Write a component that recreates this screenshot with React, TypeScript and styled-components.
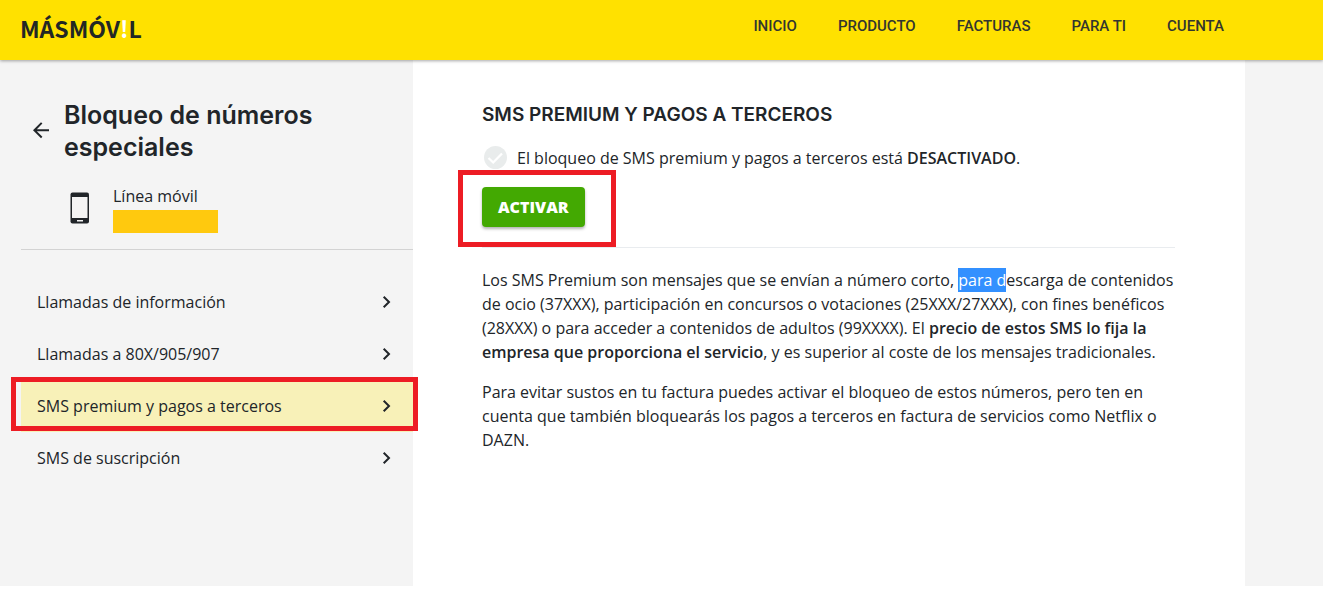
import React from "react";
import styled, { createGlobalStyle } from "styled-components";

const INK = "#212529";
const YELLOW = "#ffe100";
const BODY_FONT = `"Open Sans", "Noto Sans", sans-serif`;
const TITLE_FONT = `Inter, "Open Sans", sans-serif`;

const GlobalStyle = createGlobalStyle`
  * { box-sizing: border-box; }
  body {
    margin: 0;
    background: #fff;
    color: ${INK};
    font: 400 16px/24px ${BODY_FONT};
  }
`;

const Header = styled.header`
  position: relative;
  z-index: 1;
  display: flex;
  align-items: center;
  justify-content: space-between;
  height: 60px;
  padding: 0 99px 0 20px;
  background: ${YELLOW};
  box-shadow: 0 1px 3px rgba(0, 0, 0, 0.35);
`;

const Logo = styled.a`
  padding-bottom: 4px;
  color: #222725;
  font: 700 23px/40px "Noto Sans CJK SC", sans-serif;
  text-decoration: none;
`;

const LogoMark = styled.span`
  color: #fff;
`;

const Nav = styled.nav`
  display: flex;
  gap: 41px;
  padding-bottom: 8px;
`;

const NavLink = styled.a`
  color: #33362f;
  font: 500 15px/24px Roboto, sans-serif;
  text-decoration: none;
`;

const Page = styled.div`
  display: flex;
  min-height: calc(100vh - 69px);
  background: #f4f4f4;
`;

const Sidebar = styled.aside`
  flex: 0 0 413px;
  padding: 39px 0 24px 21px;
`;

const TitleRow = styled.div`
  display: flex;
  align-items: center;
  gap: 11px;
  padding: 0 64px 0 8px;
`;

const BackButton = styled.button`
  display: flex;
  padding: 0;
  border: 0;
  background: none;
  color: ${INK};
`;

const Title = styled.h1`
  margin: 0;
  font: 600 25px/32px ${TITLE_FONT};
`;

const Device = styled.div`
  display: flex;
  gap: 23px;
  margin-top: 21px;
  padding: 0 0 16px 49px;
  border-bottom: 1px solid #d3d3d3;
`;

const DeviceIcon = styled.svg`
  flex: none;
  width: 20px;
  height: 32px;
  margin-top: 8px;
`;

const HiddenNumber = styled.div`
  width: 105px;
  height: 23px;
  margin-top: 2px;
  background: #ffc90e;
`;

const Menu = styled.nav`
  display: flex;
  flex-direction: column;
  margin-top: 26px;
`;

const MenuItem = styled.a<{ $active?: boolean }>`
  position: relative;
  display: flex;
  align-items: center;
  justify-content: space-between;
  height: 52px;
  padding: 0 18px 0 16px;
  background: ${(p) => (p.$active ? "#f8f1b8" : "transparent")};
  color: ${INK};
  text-decoration: none;
`;

const Frame = styled.span<{ $inset: string }>`
  position: absolute;
  inset: ${(p) => p.$inset};
  border: 5px solid #ed1c24;
  pointer-events: none;
`;

const Main = styled.main`
  flex: 0 1 832px;
  padding: 43px 70px 24px 69px;
  background: #fff;
`;

const Heading = styled.h2`
  margin: 0 0 19px;
  font: 600 19px/24px ${TITLE_FONT};
`;

const Status = styled.p`
  display: flex;
  align-items: center;
  gap: 8px;
  margin: 0;
`;

const Strong = styled.strong`
  font-weight: 600;
`;

const Action = styled.div`
  padding: 17px 0 20px;
  border-bottom: 1px solid #e9ecef;
  margin-bottom: 20px;
`;

const ButtonHolder = styled.div`
  position: relative;
  width: fit-content;
`;

const Button = styled.button`
  display: block;
  height: 40px;
  padding: 0 16px;
  border: 0;
  border-radius: 4px;
  background: #43a902;
  box-shadow: 0 2px 3px rgba(0, 0, 0, 0.3);
  color: #fff;
  font: 800 16px/24px ${BODY_FONT};
`;

const Paragraph = styled.p`
  margin: 0 0 16px;
`;

const Selected = styled.mark`
  padding: 1px 0;
  background: #3390ff;
  color: #fff;
`;

const Chevron = () => (
  <svg width="16" height="16" viewBox="0 0 16 16" fill="none" stroke={INK} strokeWidth="2" aria-hidden="true">
    <path d="M4.7 2.7 10 8l-5.3 5.3" />
  </svg>
);

const NAV = ["INICIO", "PRODUCTO", "FACTURAS", "PARA TI", "CUENTA"];
const ITEMS = [
  "Llamadas de información",
  "Llamadas a 80X/905/907",
  "SMS premium y pagos a terceros",
  "SMS de suscripción",
];
const ACTIVE = 2;

export default function App() {
  return (
    <>
      <GlobalStyle />
      <Header>
        <Logo href="#">
          MÁSMÓV<LogoMark>!</LogoMark>L
        </Logo>
        <Nav>
          {NAV.map((label) => (
            <NavLink key={label} href="#">
              {label}
            </NavLink>
          ))}
        </Nav>
      </Header>
      <Page>
        <Sidebar>
          <TitleRow>
            <BackButton type="button" aria-label="Volver">
              <svg width="24" height="24" viewBox="0 0 24 24" fill="currentColor">
                <path d="M20 10.2H7.83l5.59-5.59L12 3.2l-8 8 8 8 1.41-1.41L7.83 12.2H20v-2z" />
              </svg>
            </BackButton>
            <Title>Bloqueo de números especiales</Title>
          </TitleRow>
          <Device>
            <DeviceIcon viewBox="0 0 20 32" aria-hidden="true">
              <rect x="0.5" y="0.5" width="18.5" height="31" rx="2" fill={INK} />
              <rect x="2" y="5" width="15.5" height="21" fill="#f4f4f4" />
              <rect x="7" y="28" width="6" height="1.5" fill="#f4f4f4" />
            </DeviceIcon>
            <div>
              <div>Línea móvil</div>
              <HiddenNumber />
            </div>
          </Device>
          <Menu>
            {ITEMS.map((label, i) => (
              <MenuItem key={label} href="#" $active={i === ACTIVE}>
                {label}
                <Chevron />
                {i === ACTIVE && <Frame $inset="-3px -5px 1px -10px" />}
              </MenuItem>
            ))}
          </Menu>
        </Sidebar>
        <Main>
          <Heading>SMS PREMIUM Y PAGOS A TERCEROS</Heading>
          <Status>
            <svg width="27" height="24" viewBox="0 0 27 24" aria-hidden="true">
              <circle cx="13.5" cy="11.5" r="11.5" fill="#e9ecec" />
              <path d="m6.5 12 4.7 4.5 8.8-9" fill="none" stroke="#fff" strokeWidth="2.3" />
            </svg>
            <span>
              El bloqueo de SMS premium y pagos a terceros está <Strong>DESACTIVADO</Strong>.
            </span>
          </Status>
          <Action>
            <ButtonHolder>
              <Button type="button">ACTIVAR</Button>
              <Frame $inset="-17px -31px -20px -24px" />
            </ButtonHolder>
          </Action>
          <Paragraph>
            Los SMS Premium son mensajes que se envían a número corto, <Selected>para d</Selected>
            escarga de contenidos de ocio (37XXX), participación en concursos o votaciones
            (25XXX/27XXX), con fines benéficos (28XXX) o para acceder a contenidos de adultos
            (99XXXX). El{" "}
            <Strong>precio de estos SMS lo fija la empresa que proporciona el servicio</Strong>, y es
            superior al coste de los mensajes tradicionales.
          </Paragraph>
          <Paragraph>
            Para evitar sustos en tu factura puedes activar el bloqueo de estos números, pero ten en
            cuenta que también bloquearás los pagos a terceros en factura de servicios como Netflix o
            DAZN.
          </Paragraph>
        </Main>
      </Page>
    </>
  );
}
